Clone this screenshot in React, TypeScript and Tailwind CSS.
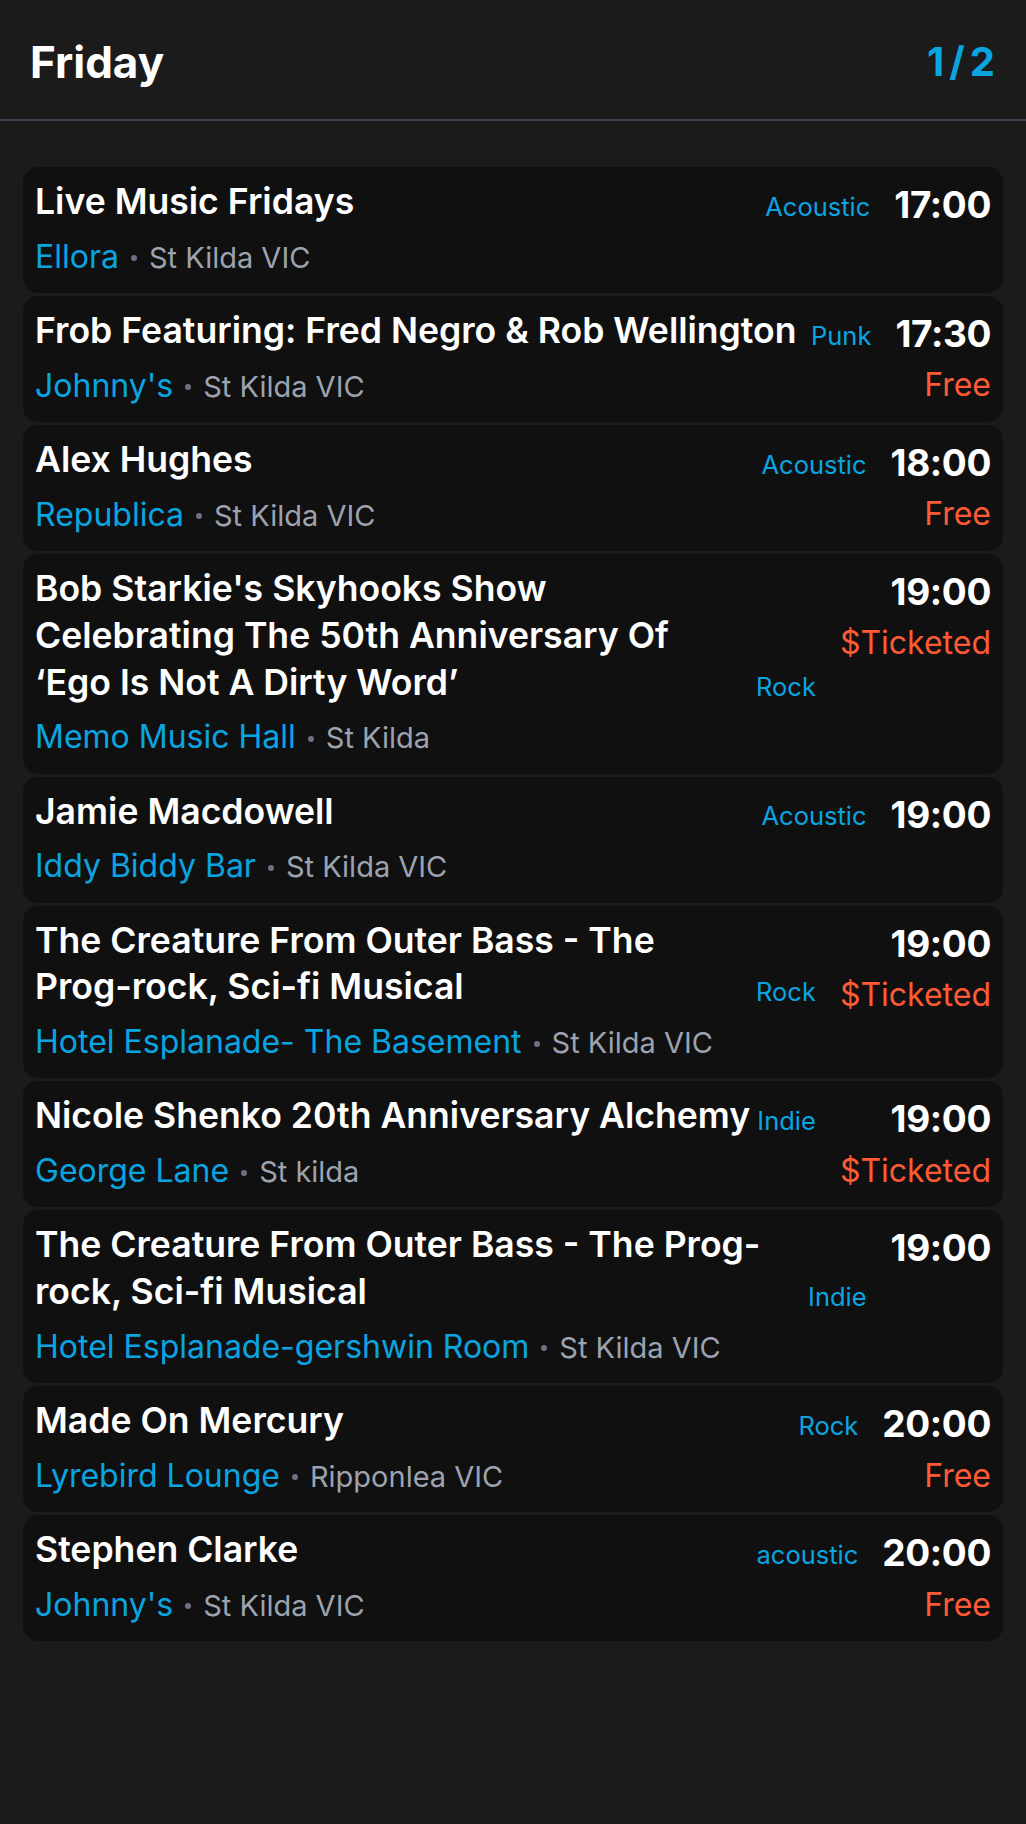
type Ev = {
  title: string;
  genre: string;
  time: string;
  venue: string;
  loc: string;
  price?: string;
};

const events: Ev[] = [
  { title: "Live Music Fridays", genre: "Acoustic", time: "17:00", venue: "Ellora", loc: "St Kilda VIC" },
  { title: "Frob Featuring: Fred Negro & Rob Wellington", genre: "Punk", time: "17:30", venue: "Johnny's", loc: "St Kilda VIC", price: "Free" },
  { title: "Alex Hughes", genre: "Acoustic", time: "18:00", venue: "Republica", loc: "St Kilda VIC", price: "Free" },
  {
    title: "Bob Starkie's Skyhooks Show Celebrating The 50th Anniversary Of \u2018Ego Is Not A Dirty Word\u2019",
    genre: "Rock",
    time: "19:00",
    venue: "Memo Music Hall",
    loc: "St Kilda",
    price: "$Ticketed",
  },
  { title: "Jamie Macdowell", genre: "Acoustic", time: "19:00", venue: "Iddy Biddy Bar", loc: "St Kilda VIC" },
  {
    title: "The Creature From Outer Bass - The Prog-rock, Sci-fi Musical",
    genre: "Rock",
    time: "19:00",
    venue: "Hotel Esplanade- The Basement",
    loc: "St Kilda VIC",
    price: "$Ticketed",
  },
  { title: "Nicole Shenko 20th Anniversary Alchemy", genre: "Indie", time: "19:00", venue: "George Lane", loc: "St kilda", price: "$Ticketed" },
  {
    title: "The Creature From Outer Bass - The Prog-rock, Sci-fi Musical",
    genre: "Indie",
    time: "19:00",
    venue: "Hotel Esplanade-gershwin Room",
    loc: "St Kilda VIC",
  },
  { title: "Made On Mercury", genre: "Rock", time: "20:00", venue: "Lyrebird Lounge", loc: "Ripponlea VIC", price: "Free" },
  { title: "Stephen Clarke", genre: "acoustic", time: "20:00", venue: "Johnny's", loc: "St Kilda VIC", price: "Free" },
];

function Card({ ev }: { ev: Ev }) {
  return (
    <div className="flex gap-[24px] rounded-[15px] bg-[#101010] pb-[16.2px] pl-[12px] pr-[12px] pt-[12px]">
      <div className="flex min-w-0 flex-1 flex-col">
        <div className="flex items-end gap-[6px]">
          <div className="min-w-0 flex-1 text-[35.6px] font-semibold leading-[46.8px] text-white">{ev.title}</div>
          <div className="shrink-0 text-[25.5px] leading-[38px] text-[#0aa5e0]">{ev.genre}</div>
        </div>
        <div className="mt-[10px] flex h-[41px] items-baseline overflow-visible leading-[41px]">
          <span className="text-[32px] text-[#0aa5e0]">{ev.venue}</span>
          <span className="mx-[12px] inline-block h-[6px] w-[6px] translate-y-[2px] self-center rounded-full bg-[#6b7280]" />
          <span className="text-[29px] text-[#9ca3af]">{ev.loc}</span>
        </div>
      </div>
      <div className="flex shrink-0 flex-col items-end">
        <div className="text-[37px] font-bold leading-[52px] tracking-[-0.01em] text-white">{ev.time}</div>
        {ev.price && <div className="mt-[4.5px] text-[32px] leading-[41px] text-[#ff5a36]">{ev.price}</div>}
      </div>
    </div>
  );
}

export default function App() {
  return (
    <div className="min-h-[1824px] bg-[#1b1b1b] font-['Inter','Liberation_Sans',sans-serif] text-white">
      <header className="flex h-[121px] items-center justify-between border-b-2 border-[#3a4352] pl-[30px] pr-[31px] pt-[5px]">
        <h1 className="text-[44px] font-bold leading-none">Friday</h1>
        <div className="flex items-baseline gap-[5px] text-[40px] font-bold leading-none text-[#0aa5e0]">
          <span>1</span>
          <span>/</span>
          <span>2</span>
        </div>
      </header>
      <main className="flex flex-col gap-[3px] px-[23px] pt-[46px]">
        {events.map((ev, i) => (
          <Card key={i} ev={ev} />
        ))}
      </main>
    </div>
  );
}
